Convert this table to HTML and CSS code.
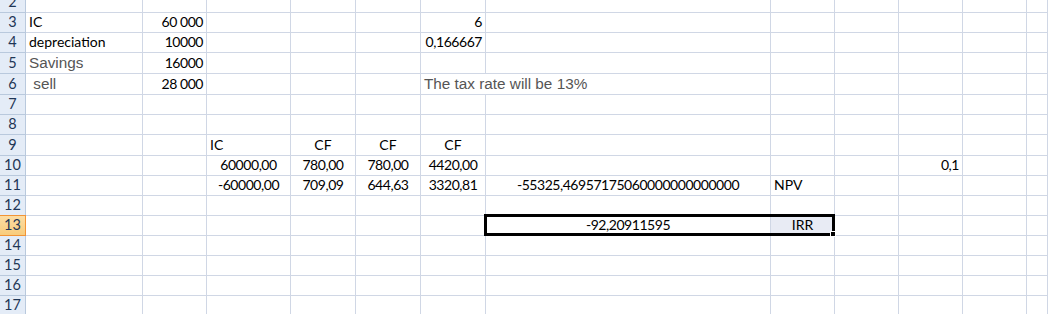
FILE: index.html
```html
<!DOCTYPE html>
<html lang="en">
<head>
  <meta charset="UTF-8" />
  <title>Investment - NPV / IRR</title>
  <link rel="stylesheet" href="styles.css">
</head>
<body>

  <div class="sheet" id="sheet"></div>

  <script>
    const COLS = ["A", "B", "C", "D", "E", "F", "G", "H", "I", "J", "K", "L"];
    const FIRST_ROW = 2;

    // value, alignment/style classes, column span
    const cells = {
      A3: ["IC"], B3: ["60 000", "num"], F3: ["6", "num"],
      A4: ["depreciation"], B4: ["10000", "num"], F4: ["0,166667", "num"],
      A5: ["Savings", "note"], B5: ["16000", "num"],
      A6: [" sell", "note"], B6: ["28 000", "num"], F6: ["The tax rate will be 13%", "note", 2],
      C9: ["IC"], D9: ["CF", "mid"], E9: ["CF", "mid"], F9: ["CF", "mid"],
      C10: ["60000,00", "mid"], D10: ["780,00", "mid"], E10: ["780,00", "mid"], F10: ["4420,00", "mid"],
      J10: ["0,1", "num"],
      C11: ["-60000,00", "mid"], D11: ["709,09", "mid"], E11: ["644,63", "mid"], F11: ["3320,81", "mid"],
      G11: ["-55325,46957175060000000000000", "mid"], H11: ["NPV"],
      G13: ["-92,20911595", "mid"], H13: ["IRR", "mid picked"]
    };

    // active range G13:H13
    const selection = { row: 13, col: "G", span: 2 };

    function place(el, r, c, span) {
      el.style.gridRow = r - FIRST_ROW + 1;
      el.style.gridColumn = (c + 2) + " / span " + (span || 1);
    }

    function buildSheet() {
      const sheet = document.getElementById("sheet");

      for (let r = FIRST_ROW; r <= 17; r++) {
        const head = document.createElement("div");
        head.className = "row-head" + (r === selection.row ? " active" : "");
        head.textContent = r;
        sheet.appendChild(head);

        let skip = 0;
        COLS.forEach((col, i) => {
          if (skip > 0) { skip--; return; }
          const data = cells[col + r];
          const cell = document.createElement("div");
          cell.className = "cell";
          let span = 1;
          if (data) {
            cell.textContent = data[0];
            if (data[1]) cell.className += " " + data[1];
            if (/^[-\d ,]+$/.test(data[0])) cell.className += " fig";
            if (data[2]) {
              span = data[2];
              skip = span - 1;
            }
          }
          place(cell, r, i, span);
          sheet.appendChild(cell);
        });
      }

      const frame = document.createElement("div");
      frame.className = "selection";
      place(frame, selection.row, COLS.indexOf(selection.col), selection.span);
      sheet.appendChild(frame);
    }

    buildSheet();
  </script>
</body>
</html>
```

FILE: styles.css
```css
:root {
  --grid: #d0d7e5;
  --head-bg: #e4ecf7;
  --head-line: #b9c9dd;
  --head-text: #1f3656;
  --note: #555555;
}

body {
  margin: 0;
  background: #ffffff;
  overflow: hidden;
  font-family: Lato, "Open Sans", sans-serif;
  font-size: 14px;
  color: #000;
}

.sheet {
  display: grid;
  grid-template-columns: 26px 117px 64px 84px 65px 65px 65px 285px 64px 64px 64px 64px 1fr;
  grid-template-rows: 20px 20px 20px 21px 21px 20px 20px 21px 20px 20px 20px 20px 20px 20px 20px 20px;
  margin-top: -7px;
  width: 1048px;
}

.row-head {
  grid-column: 1;
  background: var(--head-bg);
  border-right: 1px solid var(--head-line);
  border-bottom: 1px solid var(--head-line);
  color: var(--head-text);
  display: flex;
  align-items: flex-end;
  justify-content: center;
  padding-bottom: 2px;
  line-height: 16px;
  font-size: 14.5px;
  box-sizing: border-box;
}

.row-head.active {
  background: linear-gradient(#fcdda4, #f8cc7c);
  border-color: #f29436;
  border-top: 1px solid #f29436;
  margin-top: -1px;
}

.cell {
  border-right: 1px solid var(--grid);
  border-bottom: 1px solid var(--grid);
  box-sizing: border-box;
  display: flex;
  align-items: flex-end;
  padding: 0 3px 2px;
  line-height: 16px;
  white-space: pre;
  overflow: visible;
}

.num { justify-content: flex-end; }
.mid { justify-content: center; }
.fig { letter-spacing: -0.45px; }

.note {
  font-family: "Liberation Sans", Arial, sans-serif;
  font-size: 15.3px;
  color: var(--note);
  line-height: 17px;
}

.picked { background: #e8ebf4; }

.selection {
  margin: -2px 0 0 -2px;
  border: 3px solid #000;
  position: relative;
  pointer-events: none;
}

.selection::after {
  content: "";
  position: absolute;
  right: -4px;
  bottom: -4px;
  width: 4px;
  height: 4px;
  background: #000;
  border: 1px solid #fff;
}
```
